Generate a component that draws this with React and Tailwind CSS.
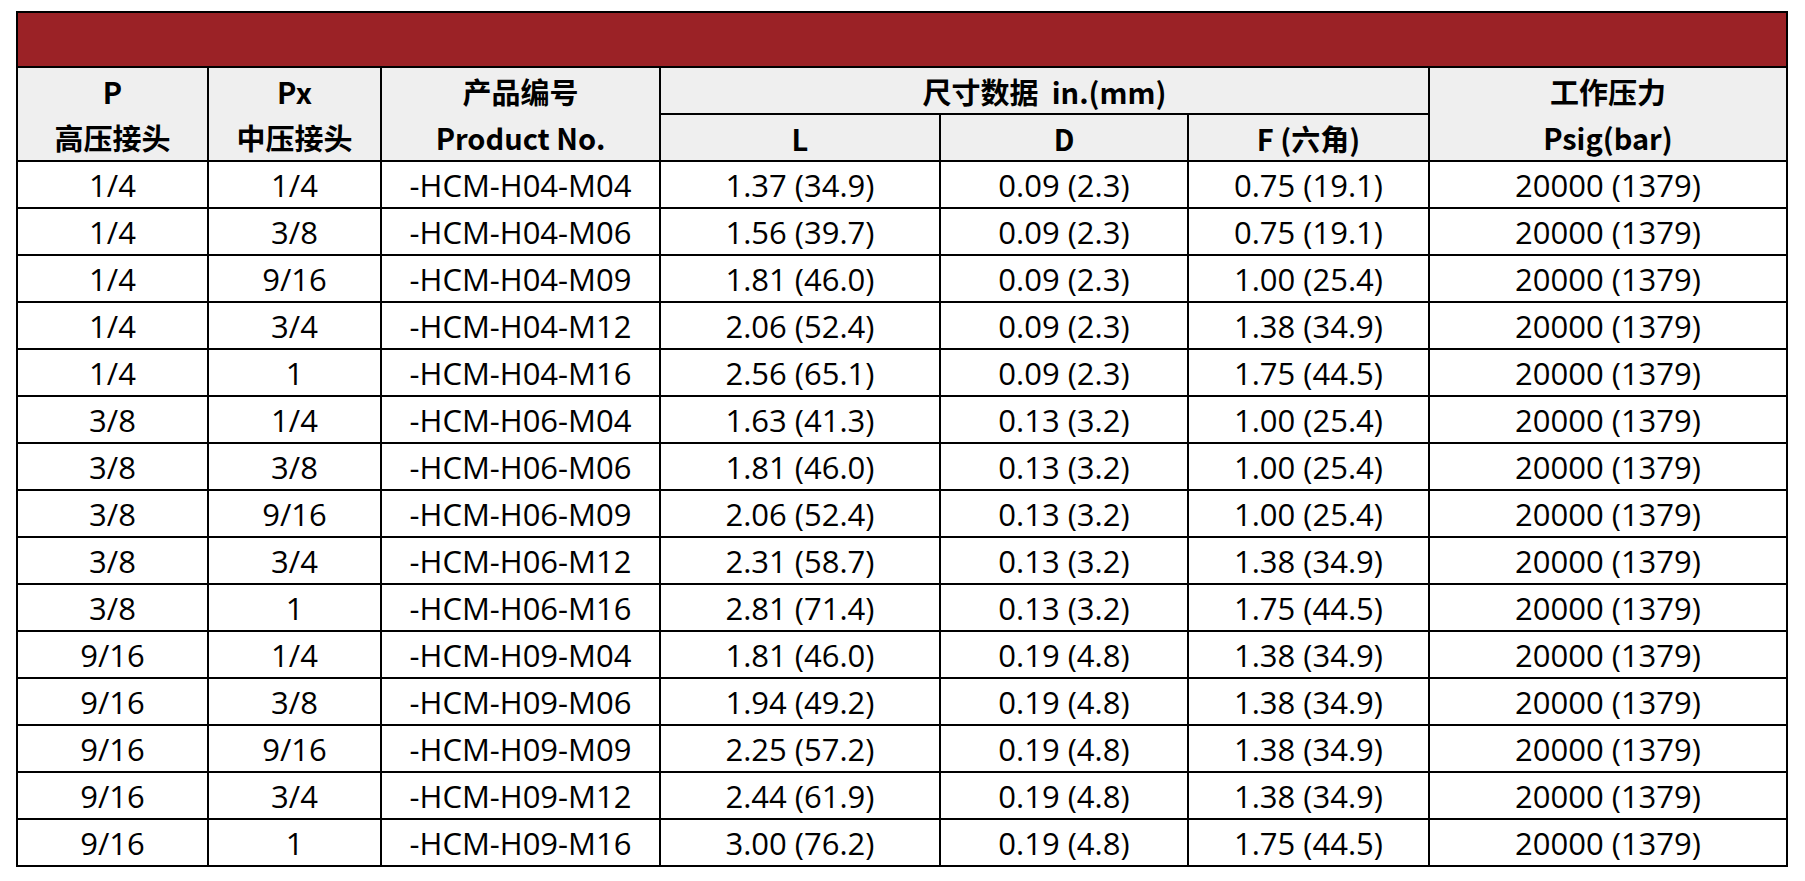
import React from 'react';

const rows = [
  ['1/4', '1/4', '-HCM-H04-M04', '1.37 (34.9)', '0.09 (2.3)', '0.75 (19.1)', '20000 (1379)'],
  ['1/4', '3/8', '-HCM-H04-M06', '1.56 (39.7)', '0.09 (2.3)', '0.75 (19.1)', '20000 (1379)'],
  ['1/4', '9/16', '-HCM-H04-M09', '1.81 (46.0)', '0.09 (2.3)', '1.00 (25.4)', '20000 (1379)'],
  ['1/4', '3/4', '-HCM-H04-M12', '2.06 (52.4)', '0.09 (2.3)', '1.38 (34.9)', '20000 (1379)'],
  ['1/4', '1', '-HCM-H04-M16', '2.56 (65.1)', '0.09 (2.3)', '1.75 (44.5)', '20000 (1379)'],
  ['3/8', '1/4', '-HCM-H06-M04', '1.63 (41.3)', '0.13 (3.2)', '1.00 (25.4)', '20000 (1379)'],
  ['3/8', '3/8', '-HCM-H06-M06', '1.81 (46.0)', '0.13 (3.2)', '1.00 (25.4)', '20000 (1379)'],
  ['3/8', '9/16', '-HCM-H06-M09', '2.06 (52.4)', '0.13 (3.2)', '1.00 (25.4)', '20000 (1379)'],
  ['3/8', '3/4', '-HCM-H06-M12', '2.31 (58.7)', '0.13 (3.2)', '1.38 (34.9)', '20000 (1379)'],
  ['3/8', '1', '-HCM-H06-M16', '2.81 (71.4)', '0.13 (3.2)', '1.75 (44.5)', '20000 (1379)'],
  ['9/16', '1/4', '-HCM-H09-M04', '1.81 (46.0)', '0.19 (4.8)', '1.38 (34.9)', '20000 (1379)'],
  ['9/16', '3/8', '-HCM-H09-M06', '1.94 (49.2)', '0.19 (4.8)', '1.38 (34.9)', '20000 (1379)'],
  ['9/16', '9/16', '-HCM-H09-M09', '2.25 (57.2)', '0.19 (4.8)', '1.38 (34.9)', '20000 (1379)'],
  ['9/16', '3/4', '-HCM-H09-M12', '2.44 (61.9)', '0.19 (4.8)', '1.38 (34.9)', '20000 (1379)'],
  ['9/16', '1', '-HCM-H09-M16', '3.00 (76.2)', '0.19 (4.8)', '1.75 (44.5)', '20000 (1379)'],
];

const head = 'bg-[#efefef] font-bold flex flex-col items-center justify-center leading-[46px]';

export default function App() {
  return (
    <div
      className="min-h-screen bg-white pt-[11px] pl-[16px] text-[29px] text-black"
      style={{ fontFamily: '"Noto Sans CJK SC", "Open Sans", sans-serif' }}
    >
      <div className="inline-grid bg-black p-[2px] gap-[2px] grid-cols-[189px_171px_277px_278px_246px_239px_356px] auto-rows-[45px] grid-rows-[53px_45px_45px]">
        {/* bandeau rouge */}
        <div className="col-span-7 bg-[#9b2226]" />

        {/* en-tête */}
        <div className={`${head} row-span-2`}>
          <span>P</span>
          <span>高压接头</span>
        </div>
        <div className={`${head} row-span-2`}>
          <span>Px</span>
          <span>中压接头</span>
        </div>
        <div className={`${head} row-span-2`}>
          <span>产品编号</span>
          <span>Product No.</span>
        </div>
        <div className={`${head} col-span-3 whitespace-pre`}>尺寸数据  in.(mm)</div>
        <div className={`${head} row-span-2`}>
          <span>工作压力</span>
          <span>Psig(bar)</span>
        </div>
        <div className={head}>L</div>
        <div className={head}>D</div>
        <div className={head}>F (六角)</div>

        {/* lignes */}
        {rows.map((r, i) =>
          r.map((v, j) => (
            <div
              key={`${i}-${j}`}
              className="bg-white flex items-center justify-center pt-[2px] text-[31px]"
              style={{ fontFamily: '"Open Sans", "Noto Sans CJK SC", sans-serif' }}
            >
              {v}
            </div>
          ))
        )}
      </div>
    </div>
  );
}
